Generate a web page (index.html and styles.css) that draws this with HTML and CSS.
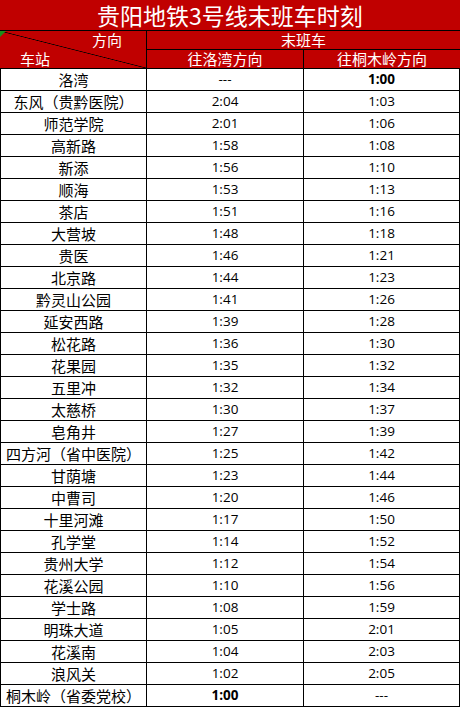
FILE: index.html
```html
<!DOCTYPE html>
<html lang="zh-CN">
<head>
<meta charset="utf-8">
<title>贵阳地铁3号线末班车时刻</title>
<link rel="stylesheet" href="styles.css">
</head>
<body>
<div class="sheet">
  <div class="title">贵阳地铁3号线末班车时刻</div>
  <div class="corner">
    <span class="corner-dir">方向</span>
    <span class="corner-station">车站</span>
    <span class="flag"></span>
  </div>
  <div class="head span2">末班车</div>
  <div class="head">往洛湾方向</div>
  <div class="head last">往桐木岭方向</div>

  <div class="station">洛湾</div><div class="time">---</div><div class="time bold">1:00</div>
  <div class="station">东风（贵黔医院）</div><div class="time">2:04</div><div class="time">1:03</div>
  <div class="station">师范学院</div><div class="time">2:01</div><div class="time">1:06</div>
  <div class="station">高新路</div><div class="time">1:58</div><div class="time">1:08</div>
  <div class="station">新添</div><div class="time">1:56</div><div class="time">1:10</div>
  <div class="station">顺海</div><div class="time">1:53</div><div class="time">1:13</div>
  <div class="station">茶店</div><div class="time">1:51</div><div class="time">1:16</div>
  <div class="station">大营坡</div><div class="time">1:48</div><div class="time">1:18</div>
  <div class="station">贵医</div><div class="time">1:46</div><div class="time">1:21</div>
  <div class="station">北京路</div><div class="time">1:44</div><div class="time">1:23</div>
  <div class="station">黔灵山公园</div><div class="time">1:41</div><div class="time">1:26</div>
  <div class="station">延安西路</div><div class="time">1:39</div><div class="time">1:28</div>
  <div class="station">松花路</div><div class="time">1:36</div><div class="time">1:30</div>
  <div class="station">花果园</div><div class="time">1:35</div><div class="time">1:32</div>
  <div class="station">五里冲</div><div class="time">1:32</div><div class="time">1:34</div>
  <div class="station">太慈桥</div><div class="time">1:30</div><div class="time">1:37</div>
  <div class="station">皂角井</div><div class="time">1:27</div><div class="time">1:39</div>
  <div class="station">四方河（省中医院）</div><div class="time">1:25</div><div class="time">1:42</div>
  <div class="station">甘荫塘</div><div class="time">1:23</div><div class="time">1:44</div>
  <div class="station">中曹司</div><div class="time">1:20</div><div class="time">1:46</div>
  <div class="station">十里河滩</div><div class="time">1:17</div><div class="time">1:50</div>
  <div class="station">孔学堂</div><div class="time">1:14</div><div class="time">1:52</div>
  <div class="station">贵州大学</div><div class="time">1:12</div><div class="time">1:54</div>
  <div class="station">花溪公园</div><div class="time">1:10</div><div class="time">1:56</div>
  <div class="station">学士路</div><div class="time">1:08</div><div class="time">1:59</div>
  <div class="station">明珠大道</div><div class="time">1:05</div><div class="time">2:01</div>
  <div class="station">花溪南</div><div class="time">1:04</div><div class="time">2:03</div>
  <div class="station">浪风关</div><div class="time">1:02</div><div class="time">2:05</div>
  <div class="station">桐木岭（省委党校）</div><div class="time bold">1:00</div><div class="time">---</div>
</div>
</body>
</html>
```

FILE: styles.css
```css
html, body {
  margin: 0;
  padding: 0;
  background: #ffffff;
}

.sheet {
  width: 460px;
  box-sizing: border-box;
  display: grid;
  grid-template-columns: 145px 156px 155px;
  grid-template-rows: 30px 18px 18px repeat(29, 21px);
  gap: 1px;
  padding: 0 1px 1px 1px;
  background: #000000;
  font-family: "Open Sans", "Noto Sans CJK SC", sans-serif;
  color: #000000;
}

.title {
  grid-column: 1 / 4;
  background: #c00000;
  color: #ffffff;
  font-family: "Noto Sans CJK SC", sans-serif;
  font-size: 23px;
  line-height: 29px;
  padding-top: 1px;
  text-align: center;
  margin: 0 -1px;
}

.corner {
  grid-row: 2 / 4;
  position: relative;
  display: flex;
  flex-direction: column;
  justify-content: space-between;
  color: #ffffff;
  font-family: "Noto Sans CJK SC", sans-serif;
  font-size: 15px;
  line-height: 18px;
  margin-left: -1px;
  background: linear-gradient(to top right, #c00000 calc(50% - 0.7px), #000000 50%, #c00000 calc(50% + 0.7px));
}

.corner-dir {
  align-self: flex-end;
  padding-right: 24px;
}

.corner-station {
  align-self: flex-start;
  padding-left: 20px;
}

.flag {
  position: absolute;
  left: 0;
  top: 0;
  width: 0;
  height: 0;
  border-top: 6px solid #1a8f1a;
  border-right: 6px solid transparent;
}

.head {
  background: #c00000;
  color: #ffffff;
  font-family: "Noto Sans CJK SC", sans-serif;
  font-size: 15px;
  line-height: 18px;
  text-align: center;
}

.last,
.span2 {
  margin-right: -1px;
}

.span2 {
  grid-column: 2 / 4;
}

.station,
.time {
  background: #ffffff;
  text-align: center;
  line-height: 21px;
}

.station {
  font-family: "Noto Sans CJK SC", sans-serif;
  font-size: 15px;
}

.time {
  font-family: "Open Sans", "Noto Sans CJK SC", sans-serif;
  font-size: 13.5px;
}

.bold {
  font-weight: 700;
}
```
